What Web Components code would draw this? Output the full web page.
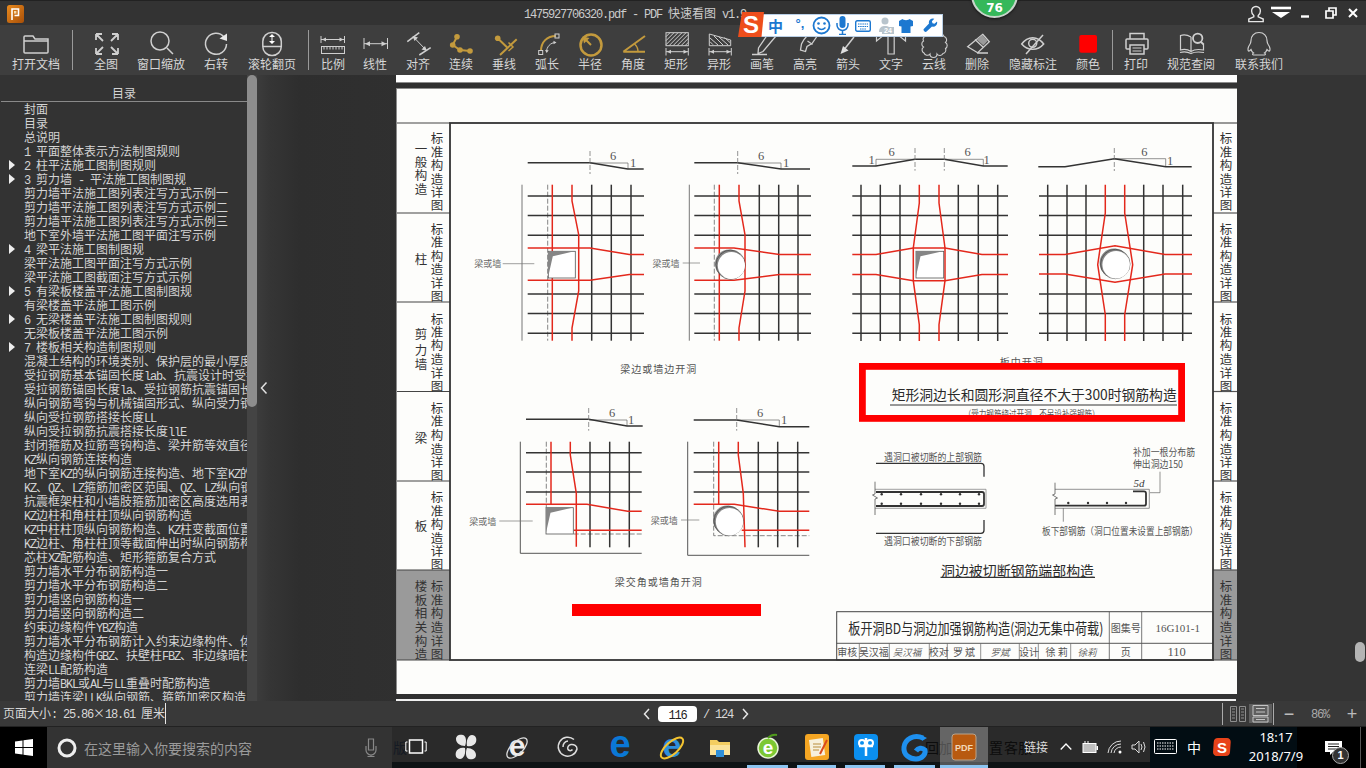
<!DOCTYPE html>
<html lang="zh">
<head>
<meta charset="utf-8">
<title>PDF 快速看图</title>
<style>
  html, body { margin: 0; padding: 0; background: #333; }
  body { width: 1366px; height: 768px; overflow: hidden; font-family: "Noto Sans CJK SC", sans-serif; }
</style>
</head>
<body>
<app-shell>
  <app-titlebar title-text="1475927706320.pdf - PDF 快速看图 v1.9"></app-titlebar>
  <app-toolbar></app-toolbar>
  <app-main>
    <toc-sidebar slot="side"></toc-sidebar>
    <pdf-viewer slot="view"></pdf-viewer>
  </app-main>
  <app-statusbar></app-statusbar>
  <win-taskbar></win-taskbar>
  <score-badge slot="over" value="76"></score-badge>
  <ime-bar slot="over"></ime-bar>
</app-shell>

<script>
// latin text in the old app is half width (6px), so it gets its own span
const latin = (s) => s.replace(/[\x20-\x7e]+/g, (m) => `<span class="l">${m}</span>`);
const FONT_CSS = `.l { font-family: "Liberation Mono", monospace; font-size: 12px; letter-spacing: -1.2px; white-space: pre; }`;

class AppShell extends HTMLElement {
  constructor() {
    super();
    this.attachShadow({ mode: "open" });
    this.shadowRoot.innerHTML = `
      <style>
        :host { display: flex; flex-direction: column; width: 1366px; height: 768px; position: relative; overflow: hidden; }
      </style>
      <slot></slot>
      <slot name="over"></slot>`;
  }
}
customElements.define("app-shell", AppShell);

class AppTitlebar extends HTMLElement {
  constructor() {
    super();
    this.attachShadow({ mode: "open" });
    const title = this.getAttribute("title-text") || "";
    this.shadowRoot.innerHTML = `
      <style>
        :host { display: flex; align-items: center; height: 25px; flex: none; box-sizing: border-box;
          background: #333; border-top: 1px solid #222; color: #ccc; font-size: 12px; line-height: 14px; }
        ${FONT_CSS}
        .logo { width: 17px; height: 18px; margin-left: 7px; margin-top: 1px; flex: none; }
        .title { margin-left: 500px; width: 400px; white-space: nowrap; flex: none; margin-top: 2px; }
        .btns { margin-left: auto; display: flex; }
        .btns svg { width: 24px; height: 24px; fill: none; stroke: #e6e6e6; stroke-width: 1.4; display: block; }
      </style>
      <svg class="logo" viewBox="0 0 17 18">
        <defs><linearGradient id="lg" x1="0" y1="0" x2="1" y2="1"><stop offset="0" stop-color="#e98a1e"/><stop offset="1" stop-color="#a84f08"/></linearGradient></defs>
        <rect width="17" height="18" rx="2.5" fill="url(#lg)"/>
        <path d="M5 15V4h6.500v6.500H7.500" fill="none" stroke="#fff" stroke-width="1.600"/>
        <rect x="7" y="6" width="2.400" height="2.600" fill="#f7d9a8"/>
      </svg>
      <div class="title">${latin(title)}</div>
      <div class="btns">
        <svg viewBox="0 0 24 24"><path d="M12 5.500a4.400 4.400 0 0 1 4.400 4.600c0 2.300-1.200 3.700-2.200 4.400v1.300l5 2.200v2.600H4.800V18l5-2.200v-1.300c-1-.7-2.200-2.100-2.200-4.400A4.400 4.400 0 0 1 12 5.500z"/></svg>
        <svg viewBox="0 0 24 24" style="margin-left:1px"><path d="M2 7h20" stroke-width="2.600" stroke="#fff"/><path d="M3 11h18l-9 6z" fill="#fff" stroke="none"/></svg>
        <svg viewBox="0 0 24 24"><path d="M8 15.500h8" stroke-width="2.400" stroke="#fff"/></svg>
        <svg viewBox="0 0 24 24"><path d="M9 10h7v7H9z M12 10V7h7v7h-3" stroke-width="1.700" stroke="#fff"/></svg>
        <svg viewBox="0 0 24 24" style="margin-right:1px"><path d="M8 8l8 8M16 8l-8 8" stroke-width="2" stroke="#fff"/></svg>
      </div>`;
  }
}
customElements.define("app-titlebar", AppTitlebar);

class ToolBtn extends HTMLElement {
  constructor() {
    super();
    this.attachShadow({ mode: "open" });
    this.shadowRoot.innerHTML = `
      <style>
        :host { display: flex; flex-direction: column; align-items: center; flex: none; height: 50px;
          box-sizing: border-box; padding-top: 6px; color: #d6d6d6; font-size: 12px; line-height: 14px; white-space: nowrap; }
        .ico { height: 26px; }
      </style>
      <div class="ico"><slot></slot></div>
      <div>${this.getAttribute("label")}</div>`;
    this.style.width = this.getAttribute("w") + "px";
  }
}
customElements.define("tool-btn", ToolBtn);

class AppToolbar extends HTMLElement {
  constructor() {
    super();
    this.attachShadow({ mode: "open" });
    const hatch = (x, y, w, h) => {
      let s = "";
      for (let i = 4; i < w + h; i += 4) {
        const x1 = x + Math.min(i, w), y1 = y + Math.max(0, i - w);
        const x2 = x + Math.max(0, i - h), y2 = y + Math.min(i, h);
        s += `M${x1} ${y1}L${x2} ${y2}`;
      }
      return s;
    };
    const dim = `<path d="M8 20.700h22M8 17v7.500M30.300 17v7.500" class="thin"/><path d="M9 20.700l4-2v4zM29.500 20.700l-4-2v4z" class="solid"/>`;
    this.shadowRoot.innerHTML = `
      <style>
        :host { display: flex; height: 50px; flex: none; background: #3e3e3e; }
        svg { width: 36px; height: 26px; display: block; fill: none; stroke: #cfcfcf; stroke-width: 1.5; overflow: visible; }
        .thin { stroke-width: 1; }
        .solid { fill: #cfcfcf; stroke: none; }
        .g { stroke: #c39a3d; stroke-width: 2; }
        .gf { fill: #c39a3d; stroke: none; }
        .div { width: 1px; height: 40px; margin-top: 5px; background: #9a9a9a; flex: none; }
      </style>
      <tool-btn label="打开文档" w="72"><svg viewBox="0 0 36 26"><path d="M6 6v15a1 1 0 0 0 1 1h22a1 1 0 0 0 1-1V8H17l-2-3H7a1 1 0 0 0-1 1zM6 10h24"/></svg></tool-btn>
      <div class="div"></div>
      <tool-btn label="全图" w="66"><svg viewBox="0 0 36 26"><path d="M8 3l7 7M8 3h6M8 3v6M30 3l-7 7M30 3h-6M30 3v6M8 23l7-7M8 23h6M8 23v-6M30 23l-7-7M30 23h-6M30 23v-6" style="stroke-width:1.800"/></svg></tool-btn>
      <tool-btn label="窗口缩放" w="44"><svg viewBox="0 0 36 26"><circle cx="17" cy="10" r="9"/><path d="M24 17l6 6"/></svg></tool-btn>
      <tool-btn label="右转" w="66"><svg viewBox="0 0 36 26"><path d="M26 6A10.500 10.500 0 1 0 28.500 13"/><path d="M21.500 7.500L29 10V2.500z" class="solid" style="fill:#e8e8e8"/></svg></tool-btn>
      <tool-btn label="滚轮翻页" w="46"><svg viewBox="0 0 36 26"><rect x="8.800" y="1.500" width="18.500" height="23" rx="9"/><path d="M9 15.500h18"/><path d="M18 4.500v7" class="thin" style="stroke:#fff"/><path d="M18 3l-3 3h6zM18 13l-3-3h6z" class="solid" style="fill:#fff"/></svg></tool-btn>
      <div class="div" style="margin-left:13px"></div>
      <tool-btn label="比例" w="48"><svg viewBox="0 0 36 26"><path d="M6 8.500h23M6 5v7M29.500 5v7" class="thin"/><path d="M7 8.500l4-2v4zM28.500 8.500l-4-2v4z" class="solid"/><rect x="6.500" y="15.500" width="23" height="7" class="thin"/><path d="M9 15.500v3M12 15.500v3M15 15.500v3M18 15.500v3M21 15.500v3M24 15.500v3M27 15.500v3" class="thin"/></svg></tool-btn>
      <tool-btn label="线性" w="36"><svg viewBox="0 0 36 26"><path d="M7 12.700h23.500M7 7v11M30.500 7v11" class="thin"/><path d="M8 12.700l5-2.500v5zM29.500 12.700l-5-2.500v5z" class="solid"/></svg></tool-btn>
      <tool-btn label="对齐" w="50"><svg viewBox="0 0 36 26"><path d="M7.300 10.700l12-9M19.300 24l11.400-7.300"/><path d="M13.500 6l12.500 13" class="thin"/><path d="M12.500 5l5.500 1.500-3.500 3.500zM27 20l-5.500-1.500 3.500-3.500z" class="solid"/></svg></tool-btn>
      <tool-btn label="连续" w="36"><svg viewBox="0 0 36 26"><path d="M14 5.700l-4.300 8.300 7.300 5 10 1" class="g"/><circle cx="14" cy="5.700" r="2.800" class="gf"/><circle cx="9.700" cy="14" r="2.800" class="gf"/><circle cx="17" cy="19" r="2.800" class="gf"/><circle cx="27" cy="20" r="2.800" class="gf"/></svg></tool-btn>
      <tool-btn label="垂线" w="50"><svg viewBox="0 0 36 26"><path d="M11.700 7.300L22 17.300M14 24L30.700 8.300" class="g"/><path d="M22.500 11.500l4.500 4.500-4.500 4" class="g" style="stroke-width:1.500"/><circle cx="11.700" cy="7.300" r="2.800" class="gf"/></svg></tool-btn>
      <tool-btn label="弧长" w="36"><svg viewBox="0 0 36 26"><path d="M12 20C12 11 18 5 27 5" class="g"/><path d="M17.500 21c0-5 4-9.500 9-9.500" class="thin"/><path d="M16 19l1.700 3 2-2.700zM27.500 11.500l-3-1.700v3.500z" class="solid"/><rect x="9.700" y="19.500" width="4" height="4" class="thin"/><rect x="26" y="3" width="4" height="4" class="thin"/></svg></tool-btn>
      <tool-btn label="半径" w="50"><svg viewBox="0 0 36 26"><circle cx="19" cy="14" r="10.500" class="g" style="stroke-width:2.500"/><path d="M19 14l-7-7" class="g"/><path d="M10.500 5.500l7 1.500-5.500 5.500z" class="gf"/></svg></tool-btn>
      <tool-btn label="角度" w="36"><svg viewBox="0 0 36 26"><path d="M8.300 20.700H30M8.300 20.700L30 5" class="g"/><path d="M19.500 13q3.500 3 3.500 7.500" class="g" style="stroke-width:1.500"/></svg></tool-btn>
      <tool-btn label="矩形" w="50"><svg viewBox="0 0 36 26"><rect x="8" y="1.700" width="22.300" height="13" class="thin"/><path d="${hatch(8, 1.7, 22.3, 13)}" class="thin"/>${dim}</svg></tool-btn>
      <tool-btn label="异形" w="36"><svg viewBox="0 0 36 26"><path d="M8.300 3l21.400 6v5.700H8.300z" class="thin"/><path d="M12 13.700l-3-3M17 14l-8-7M22 14l-9-9M27 14l-9-8M29 11.500l-5.500-5" class="thin"/>${dim}</svg></tool-btn>
      <tool-btn label="画笔" w="50"><svg viewBox="0 0 36 26"><path d="M26 0l6 5-13 15.500-5 2 .500-5.500zM8 23.500h15" style="stroke-width:1.300"/></svg></tool-btn>
      <tool-btn label="高亮" w="36"><svg viewBox="0 0 36 26"><path d="M24 0l6.500 4.500-5.500 8-5 3-1.500 5-5-1.500 1-6 2.500-4.500zM20.500 10l5 3.500" style="stroke-width:1.300"/></svg></tool-btn>
      <tool-btn label="箭头" w="50"><svg viewBox="0 0 36 26"><path d="M24 6L13 20"/><path d="M10.500 23l8-3.500-5.500-4.500z" class="solid" style="fill:#e0e0e0"/></svg></tool-btn>
      <tool-btn label="文字" w="36"><svg viewBox="0 0 36 26"><path d="M3.500 1H32.500V10L27 5.500H21.200V23H15V5.500H9L3.500 10Z" style="stroke-width:1.200"/></svg></tool-btn>
      <tool-btn label="云线" w="50"><svg viewBox="0 0 36 26"><path d="M9 5a3.500 3.500 0 0 1 6-1a3.500 3.500 0 0 1 7 0a3.500 3.500 0 0 1 6 1.500a3.500 3.500 0 0 1 1.500 6a3.500 3.500 0 0 1 0 6a3.500 3.500 0 0 1-2.500 5a3.500 3.500 0 0 1-6 .5a3.500 3.500 0 0 1-7 0a3.500 3.500 0 0 1-6-1a3.500 3.500 0 0 1-.5-6a3.500 3.500 0 0 1 0-6a3.500 3.500 0 0 1 2-5z" style="stroke-width:1.100"/></svg></tool-btn>
      <tool-btn label="删除" w="36"><svg viewBox="0 0 36 26"><path d="M23.700 3.300l6.600 7.400-11.600 11-10-6zM16 8.500l8 7.500M18 22h11" style="stroke-width:1.300"/><path d="M17.500 8.500l6-4.500 5 6-4 4.500z" class="solid" style="fill:#9a9a9a"/></svg></tool-btn>
      <tool-btn label="隐藏标注" w="76"><svg viewBox="0 0 36 26"><path d="M6.700 13c6-8.500 16-8.500 22 0-6 7-16 7-22 0z"/><circle cx="17.700" cy="12.300" r="4"/><path d="M11 23L28 4"/></svg></tool-btn>
      <tool-btn label="颜色" w="34"><svg viewBox="0 0 34 26"><rect x="8.300" y="4" width="17.700" height="17.700" rx="2" fill="#f00" stroke="none"/></svg></tool-btn>
      <div class="div" style="margin-left:7px"></div>
      <tool-btn label="打印" w="46"><svg viewBox="0 0 36 26"><path d="M12 8V2.500h14V8M12 18H9a1 1 0 0 1-1-1V9a1 1 0 0 1 1-1h20a1 1 0 0 1 1 1v8a1 1 0 0 1-1 1h-3"/><rect x="12" y="14" width="14" height="9"/><path d="M14.500 17h9M14.500 20h9" class="thin"/></svg></tool-btn>
      <tool-btn label="规范查阅" w="64"><svg viewBox="0 0 36 26"><path d="M18 6C14 3.500 10 3.500 7.500 4.500V19C11 18 15 18.500 18 20.500V6M18 20.500C21 18.500 25 18 30.500 19V13M7 21.500C11 20.500 15 21 18 22.500C21 21 25 20.500 31 21.500" style="stroke-width:1.200"/><circle cx="24.700" cy="7.300" r="4.700" style="stroke-width:1.800"/><path d="M28 11l2.700 2.500" style="stroke-width:1.800"/></svg></tool-btn>
      <tool-btn label="联系我们" w="72"><svg viewBox="0 0 36 26"><path d="M18 1.500c5 0 8 3.500 8 8 0 2 .500 3 1.500 4.500 1.500 2 2 5 1 6-1 .500-2-1-2.500-1.500-.500 1.500-1 2.500-2.500 3.500 1 .500 1.500 1.500 0 2h-11c-1.500-.500-1-1.500 0-2-1.500-1-2-2-2.500-3.500-.500.500-1.500 2-2.500 1.500-1-1-.500-4 1-6C9.500 12.500 10 11.500 10 9.500c0-4.500 3-8 8-8z" style="stroke-width:1.200"/></svg></tool-btn>`;
  }
}
customElements.define("app-toolbar", AppToolbar);

class AppMain extends HTMLElement {
  constructor() {
    super();
    this.attachShadow({ mode: "open" });
    this.shadowRoot.innerHTML = `
      <style>:host { display: flex; height: 626px; flex: none; overflow: hidden; }</style>
      <slot name="side"></slot><slot name="view"></slot>`;
  }
}
customElements.define("app-main", AppMain);

const TOC = [
  [0, "封面"], [0, "目录"], [0, "总说明"], [0, "1 平面整体表示方法制图规则"],
  [1, "2 柱平法施工图制图规则"], [1, "3 剪力墙 - 平法施工图制图规"],
  [0, "剪力墙平法施工图列表注写方式示例一"], [0, "剪力墙平法施工图列表注写方式示例二"], [0, "剪力墙平法施工图列表注写方式示例三"],
  [0, "地下室外墙平法施工图平面注写示例"], [1, "4 梁平法施工图制图规"],
  [0, "梁平法施工图平面注写方式示例"], [0, "梁平法施工图截面注写方式示例"],
  [1, "5 有梁板楼盖平法施工图制图规"], [0, "有梁楼盖平法施工图示例"],
  [1, "6 无梁楼盖平法施工图制图规则"], [0, "无梁板楼盖平法施工图示例"],
  [1, "7 楼板相关构造制图规则"],
  [0, "混凝土结构的环境类别、保护层的最小厚度"], [0, "受拉钢筋基本锚固长度lab、抗震设计时受拉钢筋"],
  [0, "受拉钢筋锚固长度la、受拉钢筋抗震锚固长度"], [0, "纵向钢筋弯钩与机械锚固形式、纵向受力钢筋"],
  [0, "纵向受拉钢筋搭接长度LL"], [0, "纵向受拉钢筋抗震搭接长度llE"],
  [0, "封闭箍筋及拉筋弯钩构造、梁并筋等效直径"], [0, "KZ纵向钢筋连接构造"],
  [0, "地下室KZ的纵向钢筋连接构造、地下室KZ的"], [0, "KZ、QZ、LZ箍筋加密区范围、QZ、LZ纵向钢筋"],
  [0, "抗震框架柱和小墙肢箍筋加密区高度选用表"], [0, "KZ边柱和角柱柱顶纵向钢筋构造"],
  [0, "KZ中柱柱顶纵向钢筋构造、KZ柱变截面位置"], [0, "KZ边柱、角柱柱顶等截面伸出时纵向钢筋构造"],
  [0, "芯柱XZ配筋构造、矩形箍筋复合方式"], [0, "剪力墙水平分布钢筋构造一"], [0, "剪力墙水平分布钢筋构造二"],
  [0, "剪力墙竖向钢筋构造一"], [0, "剪力墙竖向钢筋构造二"], [0, "约束边缘构件YBZ构造"],
  [0, "剪力墙水平分布钢筋计入约束边缘构件、体积"], [0, "构造边缘构件GBZ、扶壁柱FBZ、非边缘暗柱"],
  [0, "连梁LL配筋构造"], [0, "剪力墙BKL或AL与LL重叠时配筋构造"], [0, "剪力墙连梁LLK纵向钢筋、箍筋加密区构造"],
];

class TocSidebar extends HTMLElement {
  constructor() {
    super();
    this.attachShadow({ mode: "open" });
    const rows = TOC.map(([arrow, text]) =>
      `<div class="row${arrow ? " arrow" : ""}">${latin(text)}</div>`).join("");
    this.shadowRoot.innerHTML = `
      <style>
        :host { display: flex; flex: none; width: 270px; height: 626px; background: #333; color: #d4d4d4;
          font-size: 12px; line-height: 14px; }
        ${FONT_CSS}
        .toc { width: 246px; margin-left: 1px; overflow: hidden; display: flex; flex-direction: column; }
        .head { height: 27px; box-sizing: border-box; flex: none; text-align: center; padding-top: 10px; line-height: 16px;
          border-bottom: 1px solid #8a8a8a; font-size: 12px; }
        .row { height: 14px; padding-left: 23px; white-space: nowrap; position: relative; flex: none; }
        .arrow::before { content: ""; position: absolute; left: 8px; top: 2px; border-left: 6px solid #eee;
          border-top: 5px solid transparent; border-bottom: 5px solid transparent; }
        .bar { width: 10px; flex: none; background: #444; }
        .thumb { height: 332px; background: #8d8d8d; border-radius: 5px; }
        .handle { flex: 1; display: flex; align-items: center; justify-content: center;
          background: linear-gradient(90deg, #3c3c3c, #353535); }
        .handle svg { width: 8px; height: 14px; fill: none; stroke: #e0e0e0; stroke-width: 1.500; }
      </style>
      <div class="toc"><div class="head">目录</div>${rows}</div>
      <div class="bar"><div class="thumb"></div></div>
      <div class="handle"><svg viewBox="0 0 8 14"><path d="M6.500 1.500L1.500 7l5 5.500"/></svg></div>`;
  }
}
customElements.define("toc-sidebar", TocSidebar);

class PdfViewer extends HTMLElement {
  constructor() {
    super();
    this.attachShadow({ mode: "open" });
    this.shadowRoot.innerHTML = `
      <style>
        :host { display: flex; flex-direction: column; flex: 1; position: relative; padding-left: 126px; box-sizing: border-box;
          background: linear-gradient(90deg, #353535, #2e2e2e 30px, #343434 400px); height: 626px; overflow: hidden; }
        .prev { width: 841px; height: 8px; flex: none; background: #fff; border-bottom: 1px solid #8c8c8c; box-sizing: border-box; }
        plan-sheet { margin-top: 5px; }
        .next { width: 840px; height: 2px; margin-top: 5px; background: #f0f0f0; flex: none; }
        .knob { position: absolute; right: 1px; top: 567px; width: 10px; height: 20px; border-radius: 5px; background: #b4b4b4; }
      </style>
      <div class="prev"></div>
      <plan-sheet></plan-sheet>
      <div class="next"></div>
      <div class="knob"></div>`;
  }
}
customElements.define("pdf-viewer", PdfViewer);

class PlanSheet extends HTMLElement {
  constructor() {
    super();
    this.attachShadow({ mode: "open" });
    this.shadowRoot.innerHTML = `
      <style>
        :host { display: block; width: 842px; height: 606px; flex: none; }
        svg { display: block; width: 841px; height: 606px; background: #fdfdfb; }
        text { font-family: "Noto Sans CJK SC", sans-serif; fill: #3a3a3a; text-anchor: middle; dominant-baseline: central; }
        .strip { font-size: 12.500px; fill: #333; }
        .lab { font-size: 9px; fill: #666; }
        .num { font-family: "Liberation Serif", serif; font-size: 12.500px; fill: #555; }
        .cap { font-size: 10px; fill: #555; letter-spacing: 1px; }
        .note { font-size: 9px; fill: #555; }
        .head { font-size: 14px; fill: #2a2a2a; }
        .small { font-size: 10px; fill: #555; }
        .sig { font-size: 9.500px; fill: #666; font-style: italic; }
      </style>
      <svg viewBox="396 88 841 606">${this.draw()}</svg>`;
  }

  line(pts, color, w, extra) {
    return `<polyline fill="none" stroke="${color}" stroke-width="${w}" points="${pts.map((p) => p.join(",")).join(" ")}" ${extra || ""}/>`;
  }

  text(x, y, s, cls, extra) {
    return `<text x="${x}" y="${y}" class="${cls}" ${extra || ""}>${s}</text>`;
  }

  // plain steel mesh: black bars, the red ones come from the panel itself
  mesh(hx1, hx2, ys, xs, y1, y2) {
    let s = "";
    ys.forEach((y) => { s += this.line([[hx1, y], [hx2, y]], "#333", 1.5); });
    xs.forEach((x) => { s += this.line([[x, y1], [x, y2]], "#333", 1.5); });
    return s;
  }

  squareHole(x, y, w, h) {
    return `<rect x="${x}" y="${y}" width="${w}" height="${h}" fill="#fff" stroke="#555" stroke-width="0.800"/>
      <path d="M${x} ${y}H${x + w - 1}L${x + 4.5} ${y + 5}L${x} ${y + 25}Z" fill="#858585"/>`;
  }

  roundHole(cx, cy, r) {
    return `<circle cx="${cx - 1.3}" cy="${cy - 1}" r="${r - 0.3}" fill="#858585"/>
      <circle cx="${cx}" cy="${cy}" r="${r}" fill="none" stroke="#444" stroke-width="0.700"/>
      <circle cx="${cx + 0.8}" cy="${cy + 0.8}" r="${r - 1}" fill="#fff"/>`;
  }

  label(x, y, lx1, lx2) {
    return this.text(x, y, "梁或墙", "lab") + this.line([[lx1, y], [lx2, y]], "#777", 0.7);
  }

  draw() {
    const RED = "#e3281c";
    const RW = 1.5;
    const DIM = "#666";
    const dash = 'stroke-dasharray="5 2"';
    const ys = [196, 215.6, 235.2, 294, 313.6, 333.2];
    const ylow = [452.7, 472, 492];
    let o = "";

    // title strips left and right of the frame
    const sections = [123, 213, 302, 391.5, 481, 570, 660];
    const col = [[137, 151, 164, 178, 191, 204], [228, 241, 255, 268, 282, 295], [318, 331, 344, 358, 372, 385],
      [407, 420, 434, 448, 461, 474], [496, 510, 523, 537, 550, 563], [585, 599, 612, 626, 640, 653]];
    const names = "标准构造详图".split("");
    o += `<rect x="397" y="570" width="53" height="90" fill="#9a9a9a"/><rect x="1214" y="570" width="24" height="90" fill="#9a9a9a"/>`;
    sections.forEach((y) => {
      o += this.line([[397, y], [450, y]], "#444", 1.2) + this.line([[1213, y], [1238, y]], "#555", 1.2);
    });
    col.forEach((ycol) => ycol.forEach((y, i) => {
      o += this.text(437, y, names[i], "strip") + this.text(1226, y, names[i], "strip");
    }));
    [["一", 148], ["般", 161], ["构", 174], ["造", 188], ["柱", 258], ["剪", 333], ["力", 349], ["墙", 363], ["梁", 437], ["板", 525],
      ["楼", 585], ["板", 599], ["相", 612], ["关", 626], ["构", 640], ["造", 653]].forEach(([c, y]) => {
      o += this.text(421, y, c, "strip");
    });

    // panel 1, hole at the beam or wall edge, square
    const p1 = [[527.7, 162.7], [590, 162.7], [627.7, 169], [643.7, 169]];
    o += this.line([[590, 163], [628, 163], [628, 169]], DIM, 0.7) + this.line(p1, "#333", 1.5) + this.line([[590, 151], [590, 174]], "#777", 0.8, dash);
    o += this.text(613, 156, "6", "num") + this.text(633, 163, "1", "num");
    o += this.line([[522, 184.7], [522, 340.7]], "#777", 1) + this.line([[547.7, 184.7], [547.7, 340.7]], "#666", 0.8, dash);
    o += this.mesh(527.7, 644, ys, [591.7, 611.3, 631], 184.7, 340.7);
    o += this.line([[552.3, 184.7], [552.3, 340.7]], RED, RW);
    o += this.line([[572, 184.7], [572, 201], [578.7, 234.7], [578.7, 291], [572, 328], [572, 340.7]], RED, RW);
    o += this.line([[527.7, 248], [590, 248], [629.3, 254.5], [644, 254.5]], RED, RW);
    o += this.line([[527.7, 280.3], [590, 280.3], [629.3, 274.4], [644, 274.4]], RED, RW);
    o += this.squareHole(548.3, 251.3, 27, 26.7) + this.label(487.7, 263.7, 502.7, 534.3);

    // panel 2, same with a round hole
    o += this.line([[737.7, 163], [781, 163], [781, 169]], DIM, 0.7) + this.line([[694.3, 162.7], [737.7, 162.7], [781, 169], [810, 169]], "#333", 1.5) + this.line([[737.7, 151], [737.7, 174]], "#777", 0.8, dash);
    o += this.text(761, 156, "6", "num") + this.text(786, 163, "1", "num");
    o += this.line([[689.3, 184.7], [689.3, 340.7]], "#777", 1) + this.line([[714.3, 184.7], [714.3, 340.7]], "#666", 0.8, dash);
    o += this.mesh(694.3, 811, ys, [759.3, 778.7, 798], 184.7, 340.7);
    o += this.line([[719.3, 184.7], [719.3, 340.7]], RED, RW);
    o += this.line([[739, 184.7], [739, 201], [745, 234.7], [745, 291], [739, 328], [739, 340.7]], RED, RW);
    o += this.line([[694.3, 248], [734, 248], [779.3, 254.5], [811, 254.5]], RED, RW);
    o += this.line([[694.3, 280.3], [734, 280.3], [779.3, 274.4], [811, 274.4]], RED, RW);
    o += this.roundHole(730.6, 264.7, 14.6) + this.label(666, 263, 682.7, 700);
    o += this.text(658.7, 368.7, "梁边或墙边开洞", "cap");

    // panel 3, square hole mid slab
    o += this.line([[876, 166], [876, 159.3], [915, 159.3]], DIM, 0.7) + this.line([[944.3, 159.3], [983.3, 159.3], [983.3, 166]], DIM, 0.7);
    o += this.line([[852.3, 166], [876, 166], [915, 159.3], [944.3, 159.3], [983.3, 166], [1007.7, 166]], "#333", 1.5);
    o += this.line([[915, 148], [915, 170.7]], "#777", 0.8, dash) + this.line([[944.3, 148], [944.3, 170.7]], "#777", 0.8, dash);
    o += this.text(871.7, 160, "1", "num") + this.text(891.7, 152, "6", "num") + this.text(967.7, 152, "6", "num") + this.text(986.7, 160, "1", "num");
    o += this.mesh(852.3, 1008, ys, [861, 880.3, 900, 958.3, 978.3, 997.7], 184.7, 341);
    o += this.line([[919.3, 184.7], [919.3, 203], [913.3, 248], [913.3, 280.7], [919.3, 324.7], [919.3, 341]], RED, RW);
    o += this.line([[939, 184.7], [939, 203], [945, 248], [945, 280.7], [939, 324.7], [939, 341]], RED, RW);
    o += this.line([[852.3, 254.4], [876, 254.4], [913.3, 248], [945, 248], [982, 254.4], [1008, 254.4]], RED, RW);
    o += this.line([[852.3, 274.4], [876, 274.4], [913.3, 280.7], [945, 280.7], [982, 274.4], [1008, 274.4]], RED, RW);
    o += this.squareHole(916, 251.3, 27.7, 26.7);

    // panel 4, round hole mid slab
    o += this.line([[1114.3, 158.7], [1165.7, 158.7], [1165.7, 166.7]], DIM, 0.7);
    o += this.line([[1038.3, 166.7], [1065, 166.7], [1114.3, 158.7], [1165.7, 166.7], [1191.7, 166.7]], "#333", 1.5);
    o += this.line([[1114.3, 148], [1114.3, 171]], "#777", 0.8, dash);
    o += this.text(1144.3, 152, "6", "num") + this.text(1170, 161, "1", "num");
    o += this.mesh(1039, 1192, ys, [1047.7, 1067, 1086, 1143.7, 1163, 1182.7], 184.7, 341);
    o += this.line([[1105.3, 184.7], [1105.3, 213], [1097.7, 264.7], [1105.3, 314.7], [1105.3, 341]], RED, RW);
    o += this.line([[1124.7, 184.7], [1124.7, 213], [1132.7, 264.7], [1124.7, 314.7], [1124.7, 341]], RED, RW);
    o += this.line([[1039, 254.4], [1065, 254.4], [1115, 245.7], [1165, 254.4], [1192, 254.4]], RED, RW);
    o += this.line([[1039, 274], [1065, 274], [1115, 282.3], [1165, 274], [1192, 274]], RED, RW);
    o += this.roundHole(1115.3, 264, 14.7);
    o += this.text(1021.7, 361, "板中开洞", "cap");

    // panel 5, corner hole square
    o += this.line([[589, 420], [627, 420], [627, 426]], DIM, 0.7) + this.line([[526, 419.3], [588.7, 419.3], [627, 426], [642.7, 426]], "#333", 1.5) + this.line([[588.7, 408], [588.7, 430.7]], "#777", 0.8, dash);
    o += this.text(612, 413, "6", "num") + this.text(631, 420, "1", "num");
    o += this.line([[520.3, 441.7], [520.3, 553.3], [641.7, 553.3]], "#555", 1);
    o += this.line([[546.3, 441.7], [546.3, 508]], "#666", 0.8, dash) + this.line([[573.7, 534], [641.7, 534]], "#666", 0.8, dash);
    o += this.mesh(526, 641.7, ylow, [590, 609.7, 629.3], 441.7, 547.3);
    o += this.line([[551, 441.7], [551, 505]], RED, RW);
    o += this.line([[570.3, 441.7], [570.3, 455], [576.3, 493.3], [576.3, 546.7]], RED, RW);
    o += this.line([[526, 504.3], [587, 504.3], [627.7, 511.3], [641.7, 511.3]], RED, RW);
    o += this.line([[573.7, 530.3], [641.7, 530.3]], RED, RW);
    o += this.squareHole(546, 507.7, 27.3, 26.3) + this.label(482.7, 521, 499.3, 532.7);

    // panel 6, corner hole round
    o += this.line([[737, 420], [779.3, 420], [779.3, 426.7]], DIM, 0.7) + this.line([[693.7, 420], [736.7, 420], [779.3, 426.7], [809.3, 426.7]], "#333", 1.5) + this.line([[736.7, 408], [736.7, 430.7]], "#777", 0.8, dash);
    o += this.text(760, 413, "6", "num") + this.text(784, 420, "1", "num");
    o += this.line([[687.7, 441.7], [687.7, 555.3], [809.3, 555.3]], "#555", 1);
    o += this.line([[713.7, 441.7], [713.7, 535.7], [809.3, 535.7]], "#666", 0.8, dash);
    o += this.mesh(693.7, 809.3, ylow, [758.3, 777.7, 797.7], 441.7, 547.3);
    o += this.line([[718.7, 441.7], [718.7, 505]], RED, RW);
    o += this.line([[738.3, 441.7], [738.3, 455], [743.3, 493.3], [745, 547.3]], RED, RW);
    o += this.line([[693.7, 504.3], [734.3, 504.3], [779.3, 511.3], [809.3, 511.3]], RED, RW);
    o += this.line([[741.7, 530.3], [809.3, 530.3]], RED, RW);
    o += this.roundHole(728.7, 521, 14.7) + this.label(664.3, 520, 681, 699.3);
    o += this.text(658.7, 581.7, "梁交角或墙角开洞", "cap");

    // heading and note inside the annotation box
    o += this.text(1034.2, 394.3, "矩形洞边长和圆形洞直径不大于300时钢筋构造", "head", 'textLength="285" lengthAdjust="spacingAndGlyphs"');
    o += this.line([[890, 405], [1177, 405]], "#333", 1);
    o += this.text(1031.7, 413, "（受力钢筋绕过开洞，不另设补强钢筋）", "note", 'textLength="136" lengthAdjust="spacingAndGlyphs"');

    // cut bar end details
    o += this.text(933, 456.7, "遇洞口被切断的上部钢筋", "small", 'textLength="98" lengthAdjust="spacingAndGlyphs"');
    o += `<path d="M876 463.300H981a3 3 0 0 1 3 3V476.700M876 533.300H981a3 3 0 0 0 3-3V520" fill="none" stroke="#333" stroke-width="1.300"/>`;
    o += `<path d="M875 489.300H986V508.300H875" fill="none" stroke="#888" stroke-width="0.800"/>`;
    o += `<path d="M876 492H982a2 2 0 0 1 2 2V504a2 2 0 0 1-2 2H876" fill="none" stroke="#333" stroke-width="1.800"/>`;
    [881.7, 901, 921, 941, 960, 979].forEach((x) => {
      o += `<circle cx="${x}" cy="494.300" r="1.200" fill="#333"/><circle cx="${x}" cy="503.800" r="1.200" fill="#333"/>`;
    });
    o += `<path d="M875 481.700V494l-2.500 1 5 3-2.500 1V515" fill="none" stroke="#555" stroke-width="0.800"/>`;
    o += this.text(933, 540.7, "遇洞口被切断的下部钢筋", "small", 'textLength="98" lengthAdjust="spacingAndGlyphs"');

    o += this.text(1164, 451.7, "补加一根分布筋", "small", 'textLength="62" lengthAdjust="spacingAndGlyphs"');
    o += this.text(1158, 463.7, "伸出洞边150", "small", 'textLength="50" lengthAdjust="spacingAndGlyphs"');
    o += `<text x="1139" y="482.700" style="font-family:'Liberation Serif',serif;font-style:italic;font-size:11px">5d</text>`;
    o += this.line([[1160, 471.7], [1160, 492.7], [1150, 492.7]], "#666", 0.7);
    o += `<path d="M1055 489.300H1149.300V508.300H1055" fill="none" stroke="#777" stroke-width="0.800"/>`;
    o += `<path d="M1055 505.700H1144a2 2 0 0 0 2-2V493.300a2 2 0 0 0-2-2H1133" fill="none" stroke="#333" stroke-width="1.800"/>`;
    [1068.3, 1088, 1107, 1126].forEach((x) => { o += `<circle cx="${x}" cy="503" r="1.200" fill="#333"/>`; });
    o += `<path d="M1055 482.700V494l-2.500 1 5 3-2.500 1V515" fill="none" stroke="#555" stroke-width="0.800"/>`;
    o += this.line([[1063.3, 508], [1063.3, 521.7]], "#666", 0.7);
    o += this.text(1120, 530, "板下部钢筋（洞口位置未设置上部钢筋）", "small", 'textLength="156" lengthAdjust="spacingAndGlyphs"');
    o += this.text(1017.5, 570, "洞边被切断钢筋端部构造", "head", 'textLength="153" lengthAdjust="spacingAndGlyphs" style="font-size:13.500px"');
    o += this.line([[940.5, 577.3], [1095, 577.3]], "#333", 1.3);

    // title block
    o += `<rect x="836.700" y="611.700" width="376.300" height="48.300" fill="none" stroke="#444" stroke-width="1"/>`;
    o += this.line([[836.7, 643.3], [1213, 643.3]], "#444", 0.9);
    [1109.3, 1141.7].forEach((x) => { o += this.line([[x, 611.7], [x, 660]], "#555", 0.8); });
    [859.3, 889.3, 929.3, 947.3, 980.7, 1019.3, 1038.3, 1070.7].forEach((x) => { o += this.line([[x, 643.3], [x, 660]], "#666", 0.7); });
    o += this.text(975.8, 627.7, "板开洞BD与洞边加强钢筋构造(洞边无集中荷载)", "head", 'textLength="255" lengthAdjust="spacingAndGlyphs" style="font-size:15px"');
    o += this.text(1125.7, 627.7, "图集号", "small");
    o += this.text(1177.7, 627.7, "16G101-1", "num", 'style="font-size:11px"');
    o += this.text(1125.7, 651.7, "页", "small");
    o += this.text(1176.7, 652, "110", "num");
    [[847.3, "审核"], [873.7, "吴汉福"], [938.7, "校对"], [964, "罗 斌"], [1029, "设计"], [1056.7, "徐 莉"]].forEach(([x, s]) => {
      o += this.text(x, 651.7, s, "small");
    });
    [[907, "吴汉福"], [1000, "罗斌"], [1087, "徐莉"]].forEach(([x, s]) => { o += this.text(x, 651.7, s, "sig"); });

    // frame goes on top of the strips
    o += `<rect x="450" y="123" width="763" height="537" fill="none" stroke="#333" stroke-width="1.800"/>`;

    // red marks someone added on top of the scan
    o += `<rect x="862.400" y="366.400" width="319.200" height="52" fill="none" stroke="#f00" stroke-width="6.800"/>`;
    o += `<rect x="572" y="604" width="189" height="12" fill="#f00"/>`;

    // page edges
    o += `<path d="M396.500 88V694M396 88.500H1237" fill="none" stroke="#8c8c8c" stroke-width="1"/>`;
    return o;
  }
}
customElements.define("plan-sheet", PlanSheet);

class AppStatusbar extends HTMLElement {
  constructor() {
    super();
    this.attachShadow({ mode: "open" });
    this.shadowRoot.innerHTML = `
      <style>
        :host { display: flex; align-items: center; height: 26px; flex: none; background: #393939; color: #d8d8d8;
          font-size: 12px; line-height: 14px; box-sizing: border-box; border-bottom: 1px solid #222; }
        ${FONT_CSS}
        .size { width: 165px; padding-left: 3px; box-sizing: border-box; white-space: nowrap; flex: none; }
        .caret { width: 1px; height: 21px; background: #e8e8e8; flex: none; }
        .arr { width: 8px; height: 12px; fill: none; stroke: #e6e6e6; stroke-width: 1.500; flex: none; }
        .page { width: 39px; height: 16px; margin-left: 7px; background: #fff; color: #222; border-radius: 4px; text-align: center; flex: none; line-height: 16px; }
        .tot { margin-left: 6px; width: 37px; flex: none; }
        .sep { width: 1px; height: 22px; background: #aaa; flex: none; }
        .v svg { display: block; fill: none; stroke: #8f8f8f; stroke-width: 1; }
        .v { flex: none; }
        .on { background: #5f5f5f; }
        .zoom { width: 14px; text-align: center; font-size: 18px; color: #bbb; flex: none; line-height: 16px; font-family: "Liberation Sans", sans-serif; }
        .pct { margin-left: 5px; width: 38px; text-align: center; color: #aaa; flex: none; }
      </style>
      <div class="size">${latin("页面大小: 25.86×18.61 厘米")}</div><div class="caret"></div>
      <svg class="arr" style="margin-left:477px" viewBox="0 0 8 12"><path d="M6 1L1.500 6 6 11"/></svg>
      <div class="page">${latin("116")}</div>
      <div class="tot">${latin("/ 124")}</div>
      <svg class="arr" viewBox="0 0 8 12" style="margin-left:1px"><path d="M2 1l4.500 5L2 11"/></svg>
      <div class="sep" style="margin-left:473px"></div>
      <div class="v" style="margin-left:6px"><svg width="18" height="18" viewBox="0 0 18 18"><path d="M1.500 1.500h6v15h-6zM10.500 1.500h6v15h-6zM3 4h3M3 7h3M3 10h3M3 13h3M12 4h3M12 7h3M12 10h3M12 13h3"/></svg></div>
      <div class="v on" style="margin-left:2px"><svg width="23" height="19" viewBox="0 0 23 19"><path d="M4 1.500h15v10H4zM4 13h15v5H4zM7 4.500h9M7 8h9M7 15.500h9" stroke="#c4c4c4"/></svg></div>
      <div class="sep" style="margin-left:1px"></div>
      <div class="zoom" style="margin-left:8px">−</div>
      <div class="pct">${latin("86%")}</div>
      <div class="zoom" style="margin-left:6px">+</div>`;
  }
}
customElements.define("app-statusbar", AppStatusbar);

class TaskCell extends HTMLElement {
  constructor() {
    super();
    this.attachShadow({ mode: "open" });
    this.shadowRoot.innerHTML = `
      <style>
        :host { display: flex; align-items: center; justify-content: center; flex: none; height: 41px; position: relative; box-sizing: border-box; padding-bottom: 2px; }
        :host([active]) { background: rgba(255,255,255,.28); }
        :host([running])::after { content: ""; position: absolute; left: 4px; right: 5px; bottom: 0; height: 3px; background: #8cc4f0; }
        :host([active])::after { left: 0; right: 0; }
      </style><slot></slot>`;
    this.style.width = this.getAttribute("w") + "px";
  }
}
customElements.define("task-cell", TaskCell);

class WinTaskbar extends HTMLElement {
  constructor() {
    super();
    this.attachShadow({ mode: "open" });
    this.shadowRoot.innerHTML = `
      <style>
        :host { display: flex; height: 41px; flex: none; position: relative; color: #fff; font-size: 12px;
          background: linear-gradient(#2a2a2a 35px, #0e1315 35px); }
        svg { display: block; overflow: visible; }
        svg text { font-family: "Liberation Sans", sans-serif; font-weight: 700; text-anchor: middle; }
        .start { width: 47px; background: #000; flex: none; display: flex; align-items: center; justify-content: center; }
        .search { width: 345px; background: #333; flex: none; display: flex; align-items: center; color: #9a9a9a; font-size: 14px; white-space: nowrap; }
        .search svg { margin-left: 10px; }
        .search span { margin-left: 7px; width: 281px; }
        .ghost { position: absolute; top: 10px; color: #0c0c0c; font-size: 14px; white-space: nowrap; }
        .tray { width: 147px; flex: none; background: #020d13; display: flex; align-items: center; height: 41px; }
        .clock { width: 80px; flex: none; text-align: center; font: 13px/19px "Noto Sans", sans-serif; position: relative; z-index: 1; padding-bottom: 2px; }
        .notify { flex: 1; height: 41px; display: flex; align-items: center; position: relative; padding-left: 28px; background: #000; }
        .notify::after { content: ""; position: absolute; right: 5px; top: 0; bottom: 0; width: 1px; background: #555; }
        .badge { position: absolute; left: 35px; top: 20px; width: 15px; height: 15px; border-radius: 50%; background: #333; border: 1px solid #aaa; color: #fff; font: 700 11px/15px "Liberation Sans", sans-serif; text-align: center; }
      </style>
      <div class="start"><svg width="18" height="17" viewBox="0 0 18 17"><path d="M0 2.500L7.500 1.400V8H0zM8.500 1.200L18 0V8H8.500zM0 9h7.500v6.600L0 14.500zM8.500 9H18v8L8.500 15.800z" fill="#fff"/></svg></div>
      <div class="search">
        <svg width="20" height="20" viewBox="0 0 20 20"><circle cx="10" cy="10" r="8" fill="none" stroke="#eee" stroke-width="3"/></svg>
        <span>在这里输入你要搜索的内容</span>
        <svg style="margin-left:0" width="12" height="19" viewBox="0 0 12 19"><path d="M3.500 1h5v11h-5zM1 8v4a5 5 0 0 0 10 0V8M6 17v2M2.500 18.500h7" fill="none" stroke="#888" stroke-width="1.200"/></svg>
      </div>
      <div class="ghost" style="left:393px;color:#151a24">版</div>
      <div class="ghost" style="left:925px">回加</div>
      <div class="ghost" style="left:989px">置</div>
      <div class="ghost" style="left:1004px">客服</div>

      <task-cell w="48"><svg width="22" height="15" viewBox="0 0 22 15"><rect x="4.500" y="1" width="13" height="13" fill="none" stroke="#fff" stroke-width="1.500"/><path d="M2.500 3H.8v9h1.700M19.500 3h1.700v9h-1.700" fill="none" stroke="#fff"/></svg></task-cell>
      <task-cell w="52"><svg width="22" height="26" viewBox="0 0 22 26"><path d="M10 12C5 12 1 9 1 5s4-5 7-4 4 6 2 11zM12 12C11 7 13 1 17 1s5 4 4 7-5 5-9 4zM12 14c5 0 9 3 9 7s-4 5-7 4-4-6-2-11zM10 14c1 5-1 11-5 11s-5-4-4-7 5-5 9-4z" fill="#e8e8e8"/></svg></task-cell>
      <task-cell w="51"><svg width="24" height="28" viewBox="0 0 24 28"><text x="11" y="23" font-size="30" fill="#eee">e</text><ellipse cx="11" cy="15" rx="13" ry="6" transform="rotate(-45 11 15)" fill="none" stroke="#ddd" stroke-width="1.300"/></svg></task-cell>
      <task-cell w="49"><svg width="22" height="22" viewBox="0 0 22 22"><path d="M17 3.500A9.500 9.500 0 1 0 20 13c0-3-3-5-6-4.500-2.500.5-4 3-3 5 1 1.500 3.500 1.500 4.500 0M6 11c0-3 2-5.500 5-6" fill="none" stroke="#ddd" stroke-width="1.500"/></svg></task-cell>
      <task-cell w="55"><svg width="24" height="26" viewBox="0 0 24 26"><text x="12" y="23" font-size="38" fill="#0a78d6">e</text></svg></task-cell>
      <task-cell w="50"><svg width="26" height="28" viewBox="0 0 26 28"><text x="13" y="24" font-size="34" fill="#2e8fdc">e</text><ellipse cx="13" cy="15" rx="14" ry="6" transform="rotate(-42 13 15)" fill="none" stroke="#f4c430" stroke-width="2"/></svg></task-cell>
      <task-cell w="46"><svg width="22" height="20" viewBox="0 0 22 20"><path d="M1 3h7l2 2h11v13H1z" fill="#f3cd61"/><rect x="1" y="8" width="20" height="10" fill="#fbe39a"/><rect x="7" y="13" width="8" height="7" fill="#2f8fd8"/></svg></task-cell>
      <task-cell w="50" running><svg width="22" height="26" viewBox="0 0 22 26"><circle cx="11" cy="14" r="10" fill="#7cc832" stroke="#e8f4d8" stroke-width="1.500"/><text x="11" y="20" font-size="19" fill="#fff">e</text><path d="M11 4q4-4 9-3" fill="none" stroke="#4f9a1c" stroke-width="2"/></svg></task-cell>
      <task-cell w="48" running><svg width="24" height="26" viewBox="0 0 24 26"><rect width="24" height="26" rx="3" fill="#f5a623"/><rect x="5" y="5" width="14" height="17" fill="#f7f0dc" transform="rotate(-8 12 13)"/><path d="M8 10h8M8 13h8M8 16h6" stroke="#b98d3c"/><path d="M15 20L22 6" stroke="#d9481c" stroke-width="2"/></svg></task-cell>
      <task-cell w="49" running><svg width="24" height="26" viewBox="0 0 24 26"><rect width="24" height="26" rx="4" fill="#0b8fef"/><path d="M12 4v18M5 12h14" stroke="#fff" stroke-width="2.500" fill="none"/><circle cx="8" cy="9" r="3" fill="none" stroke="#fff" stroke-width="2"/><circle cx="16" cy="9" r="3" fill="none" stroke="#fff" stroke-width="2"/></svg></task-cell>
      <task-cell w="50" running><svg width="26" height="26" viewBox="0 0 26 26"><path d="M21 4C12 0 3 5 2 13s6 12 12 12 10-5 9-9c-3-3-7-2-9 1" fill="none" stroke="#1e90ef" stroke-width="5"/><path d="M19 1l6 3-5 3z" fill="#1e90ef"/></svg></task-cell>
      <task-cell w="48" running active><svg width="24" height="26" viewBox="0 0 24 26"><rect width="24" height="26" rx="3" fill="#b85a10" stroke="#b9a48c"/><text x="12" y="17" font-size="9" fill="#f2d8b8">PDF</text></svg></task-cell>

      <div style="width:36px;flex:none"></div>
      <task-cell w="24" style="color:#ddd">链接</task-cell>
      <div style="width:6px;flex:none"></div>
      <task-cell w="24"><svg width="12" height="7" viewBox="0 0 12 7"><path d="M.7 6.500L6 1l5.300 5.500" fill="none" stroke="#fff" stroke-width="1.300"/></svg></task-cell>
      <task-cell w="24"><svg width="16" height="12" viewBox="0 0 16 12"><rect x="1" y="2.500" width="13" height="9" fill="#fff" fill-opacity=".7" stroke="#fff"/><path d="M3 0v3M6 0v3" stroke="#fff"/><rect x="14.500" y="5" width="1.500" height="4" fill="#fff"/></svg></task-cell>
      <task-cell w="26"><svg width="16" height="14" viewBox="0 0 16 14"><path d="M1 13A13 13 0 0 1 14 1M4 13A10 10 0 0 1 14 4M7 13A7 7 0 0 1 14 7" fill="none" stroke="#ddd"/><circle cx="13" cy="12" r="1.500" fill="#fff"/></svg></task-cell>
      <task-cell w="22"><svg width="16" height="14" viewBox="0 0 16 14"><path d="M1 5h3l4-4v12L4 9H1zM10 4q2 3 0 6M12.500 2q3 5 0 10" fill="none" stroke="#ddd"/></svg></task-cell>

      <div class="tray">
        <task-cell w="30"><svg width="23" height="15" viewBox="0 0 23 15"><rect x=".5" y=".5" width="22" height="14" rx="1" fill="none" stroke="#fff"/><path d="M3 4h17M3 7h17M3 10h17" stroke="#fff" stroke-dasharray="1.500 1"/></svg></task-cell>
        <task-cell w="28" style="font-size:14px">中</task-cell>
        <task-cell w="28"><svg width="17" height="18" viewBox="0 0 17 18"><rect width="17" height="18" rx="4" fill="#e8431a" transform="skewX(-4)"/><text x="8" y="15" font-size="15" fill="#fff">S</text></svg></task-cell>
        <div class="clock">18:17<br>2018/7/9</div>
      </div>
      <div class="notify">
        <svg width="17" height="14" viewBox="0 0 17 14"><path d="M0 0h17v11H8l-3 3v-3H0z" fill="#fff"/><path d="M3 3h11M3 5.500h11M3 8h11" stroke="#222"/></svg>
        <div class="badge">1</div>
      </div>`;
  }
}
customElements.define("win-taskbar", WinTaskbar);

class ScoreBadge extends HTMLElement {
  constructor() {
    super();
    this.attachShadow({ mode: "open" });
    this.shadowRoot.innerHTML = `
      <style>
        :host { position: absolute; left: 971px; top: -29px; width: 47px; height: 47px; box-sizing: border-box; border-radius: 50%;
          background: #35b85a; border: 2px solid #c9d4cc; box-shadow: 0 1px 3px rgba(0,0,0,.6); color: #fff; font: 700 12px/14px "DejaVu Sans", sans-serif; text-align: center; padding-top: 28px; }
      </style>${this.getAttribute("value")}`;
  }
}
customElements.define("score-badge", ScoreBadge);

class ImeBar extends HTMLElement {
  constructor() {
    super();
    this.attachShadow({ mode: "open" });
    this.shadowRoot.innerHTML = `
      <style>
        :host { position: absolute; left: 737px; top: 10px; width: 206px; height: 29px; }
        .bar { position: absolute; left: 22px; top: 4px; right: 0; height: 23px; box-sizing: border-box; background: #fff; border: 1px solid #b9cfe6; display: flex; align-items: center; padding-left: 8px; color: #1d78d0; }
        .logo { position: absolute; left: 0; top: 0; }
        .bar > * { flex: none; }
        svg text { font-family: "Liberation Sans", sans-serif; font-weight: 700; text-anchor: middle; }
        .zh { font: 700 15px/17px "Noto Sans CJK SC", sans-serif; width: 20px; }
        .pun { width: 24px; font: 700 13px/13px "Liberation Sans", sans-serif; text-align: center; height: 17px; }
      </style>
      <div class="bar">
        <div class="zh">中</div>
        <div class="pun">°,</div>
        <svg width="19" height="19" viewBox="0 0 19 19"><circle cx="9.500" cy="9.500" r="8" fill="none" stroke="#1d78d0" stroke-width="1.800"/><circle cx="6.500" cy="7.500" r="1.300" fill="#1d78d0"/><circle cx="12.500" cy="7.500" r="1.300" fill="#1d78d0"/><path d="M5.500 11.500q4 4 8 0" fill="none" stroke="#1d78d0" stroke-width="1.500"/></svg>
        <svg width="13" height="19" viewBox="0 0 13 19" style="margin-left:5px"><rect x="3.500" y="0" width="6" height="12" rx="3" fill="#1d78d0"/><path d="M1 7v2a5.500 5.500 0 0 0 11 0V7M6.500 15v3M3 18.500h7" fill="none" stroke="#1d78d0" stroke-width="1.500"/></svg>
        <svg width="16" height="12" viewBox="0 0 16 12" style="margin-left:6px"><rect x=".7" y=".7" width="14.600" height="10.600" rx="1.500" fill="none" stroke="#1d78d0" stroke-width="1.400"/><path d="M3 4h10M3 6.500h10M5 9h6" stroke="#1d78d0" stroke-dasharray="1.500 .7"/></svg>
        <svg width="16" height="17" viewBox="0 0 16 17" style="margin-left:7px"><circle cx="7" cy="4" r="3.500" fill="#b8c4cc"/><path d="M1 15c0-5 3-6 6-6s6 1 6 6z" fill="#b8c4cc"/><rect x="4" y="10" width="12" height="7" fill="#b8c4cc"/><text x="10" y="16" font-size="7" fill="#fff">24</text></svg>
        <svg width="16" height="16" viewBox="0 0 16 16" style="margin-left:4px"><path d="M4.500 1L1 3v5l2.500.5V15h9V8.500L15 8V3l-3.500-2c-1 1.500-6 1.500-7 0z" fill="#1d78d0"/></svg>
        <svg width="15" height="15" viewBox="0 0 15 15" style="margin-left:9px"><path d="M14 3.500l-2.500 2.300-2-.6-.6-2L11.300.7A4 4 0 0 0 6 5.500L.8 11c-.8 1 0 1.800.5 2.300s1.500 1 2.300.3L9 8.500A4 4 0 0 0 14 3.500z" fill="#1d78d0"/></svg>
      </div>
      <svg class="logo" width="29" height="29" viewBox="0 0 29 29"><path d="M5 2H27L24.500 27H1Z" fill="#ee4e1c"/><text x="14" y="23" font-size="24" fill="#fff">S</text></svg>`;
  }
}
customElements.define("ime-bar", ImeBar);
</script>
</body>
</html>
